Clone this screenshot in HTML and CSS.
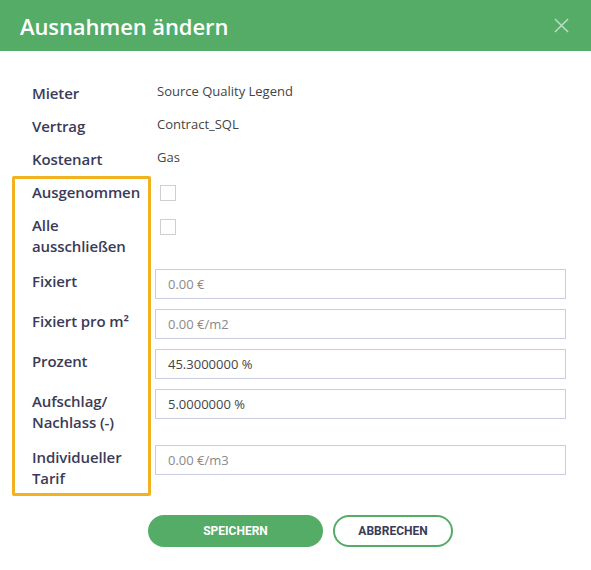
FILE: index.html
```html
<!DOCTYPE html>
<html lang="de">
<head>
<meta charset="utf-8">
<link rel="stylesheet" href="styles.css">
</head>
<body>
<div class="dialog">
  <div class="header">
    <h1 class="title">Ausnahmen ändern</h1>
    <svg class="close" width="16" height="16" viewBox="0 0 16 16"><path d="M1 1 L15 15 M15 1 L1 15" stroke="currentColor" stroke-width="1.6" fill="none"/></svg>
  </div>
  <div class="form">
    <div class="row"><div class="label">Mieter</div><div class="value">Source Quality Legend</div></div>
    <div class="row"><div class="label">Vertrag</div><div class="value">Contract_SQL</div></div>
    <div class="row"><div class="label">Kostenart</div><div class="value">Gas</div></div>
    <div class="row"><div class="label">Ausgenommen</div><div class="field"><span class="check"></span></div></div>
    <div class="row"><div class="label">Alle<br>ausschließen</div><div class="field"><span class="check check2"></span></div></div>
    <div class="row irow"><div class="label">Fixiert</div><div class="input ph">0.00 €</div></div>
    <div class="row irow"><div class="label">Fixiert pro m²</div><div class="input ph">0.00 €/m2</div></div>
    <div class="row irow"><div class="label">Prozent</div><div class="input">45.3000000 %</div></div>
    <div class="row irow"><div class="label">Aufschlag/<br>Nachlass (-)</div><div class="input">5.0000000 %</div></div>
    <div class="row irow"><div class="label">Individueller<br>Tarif</div><div class="input ph">0.00 €/m3</div></div>
    <div class="highlight"></div>
  </div>
  <div class="actions">
    <button class="btn btn-save">SPEICHERN</button>
    <button class="btn btn-cancel">ABBRECHEN</button>
  </div>
</div>
</body>
</html>
```
FILE: styles.css
```css
html, body { margin: 0; padding: 0; background: #fff; }
body { font-family: "Open Sans", "Noto Sans", sans-serif; color: #3b3b58; }
.dialog { width: 591px; height: 570px; }
.header {
  height: 51px; background: #54ac67; display: flex; align-items: center;
  justify-content: space-between; padding: 0 22px 0 20px; box-sizing: border-box;
}
.title { margin: 0; font-size: 22px; font-weight: 600; color: #fff; letter-spacing: -0.1px; }
.close { color: rgba(255,255,255,0.6); width: 15px; height: 15px; }
.form {
  position: relative; padding: 29.5px 25px 0 32px; display: flex; flex-direction: column; gap: 8px;
}
.row { display: flex; align-items: flex-start; }
.irow { margin-top: 2px; }
.label {
  width: 123px; flex: none; font-size: 15px; font-weight: 600; line-height: 21px;
  padding: 2px 0; color: #3b3b58; letter-spacing: -0.1px;
}
.value { font-size: 13px; line-height: 21px; padding: 0 0 0 2px; color: #444; }
.field { padding-top: 5px; }
.check { display: block; width: 14px; height: 14px; border: 1px solid #cfcfcf; margin-left: 5px; }
.check2 { margin-top: 1px; }
.input {
  flex: 1; height: 30px; box-sizing: border-box; border: 1px solid #c9cce2;
  padding: 0 12px; font-size: 13px; line-height: 28px; color: #444;
}
.input.ph { color: #8a8a8a; }
.highlight {
  position: absolute; left: 12px; top: 125px; width: 139px; height: 320px;
  box-sizing: border-box; border: 3px solid #f2b11e; border-radius: 2px;
}
.actions { display: flex; justify-content: center; gap: 10px; padding: 24px 0 0 10px; }
.btn {
  height: 32px; border-radius: 16px; font-family: Roboto, "Open Sans", sans-serif;
  font-weight: 700; font-size: 12px; cursor: pointer; box-sizing: border-box;
}
.btn-save { width: 175px; background: #54ac67; color: #fff; border: none; }
.btn-cancel { width: 120px; background: #fff; color: #3b3b58; border: 2px solid #54ac67; }
```
